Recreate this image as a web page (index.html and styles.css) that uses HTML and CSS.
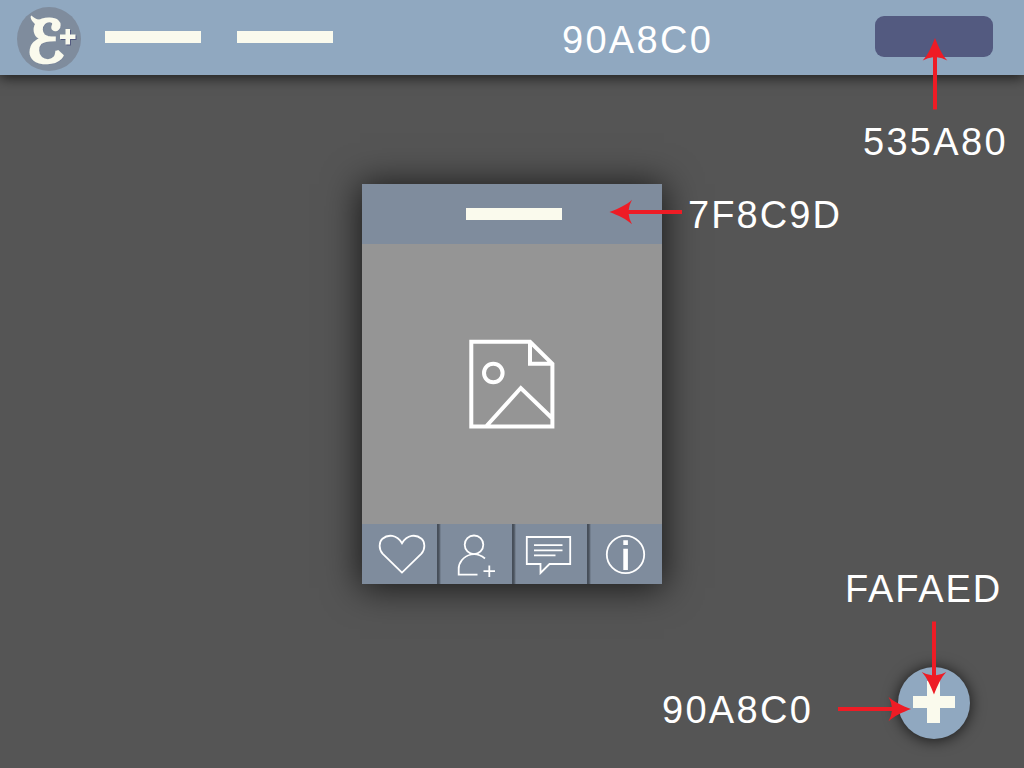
FILE: index.html
```html
<!DOCTYPE html>
<html lang="en">
<head>
<meta charset="utf-8">
<title>E+ colour guide</title>
<link rel="stylesheet" href="styles.css">
</head>
<body>
<header class="topbar">
  <div class="logo">
    <span class="logo-letter">ℰ</span>
    <svg class="logo-horn" width="16" height="16" viewBox="0 0 16 16"><path d="M1.300 0.500C4 2.500 6 4.500 9.500 4.500L12.500 9L8 13C5.500 9 2.500 7 1.500 5C0.500 3 0.300 1 1.300 0.500Z"/></svg>
    <svg class="logo-plus" width="16" height="16" viewBox="0 0 16 16"><path d="M5.500 0H10V5.500H15.500V10H10V15.500H5.500V10H0V5.500H5.500Z"/></svg>
  </div>
  <nav class="nav"><span class="bar"></span><span class="bar"></span></nav>
  <div class="header-button"></div>
</header>
<main class="stage">
  <section class="card">
    <div class="card-head"><span class="bar"></span></div>
    <div class="card-image">
      <svg width="86" height="90" viewBox="0 0 86 90" class="picture">
        <path d="M2.300 2.800H61L83.400 24.800V87.500H2.300Z M61 2.800V24.800H83.400 M17 87.500L51.800 49L83.400 79.500"/>
        <circle cx="24.300" cy="34" r="9.300"/>
      </svg>
    </div>
    <div class="actions">
      <div class="action"><svg width="75" height="60" viewBox="0 0 75 60"><path d="M40 48.600L20.800 29.800C16.300 25 17 18 20.500 14.700C26 10 34.800 10.500 40 19.200C45.200 10.500 54 10 59.500 14.700C63 18 63.700 25 59.200 29.800Z"/></svg></div>
      <div class="action"><svg width="75" height="60" viewBox="0 0 75 60"><circle cx="37" cy="20.800" r="9.300"/><path d="M48 34.500C43 30.500 38 29.500 34 30.500C26 32.500 21.500 39 21.700 45V50.700H40.500 M46.500 47.200H58 M52.300 41.500V53"/></svg></div>
      <div class="action"><svg width="75" height="60" viewBox="0 0 75 60"><path d="M14.800 13H58.200V40H37.500L28.500 49V40H14.800Z M22 21.200H50.500 M22 26.300H50.500 M22 31.400H43.500"/></svg></div>
      <div class="action"><svg width="75" height="60" viewBox="0 0 75 60"><circle cx="38.500" cy="30.500" r="18.700"/><path class="solid" d="M36.300 16.300H40.900V21H36.300Z M36.300 24.700H40.900V46H36.300Z"/></svg></div>
    </div>
  </section>
</main>
<div class="fab"><svg width="42" height="42" viewBox="0 0 42 42"><path d="M14 0H27V15H42V27H27V42H14V27H0V15H14Z"/></svg></div>

<span class="note note-header">90A8C0</span>
<span class="note note-button">535A80</span>
<span class="note note-card">7F8C9D</span>
<span class="note note-plus">FAFAED</span>
<span class="note note-fab">90A8C0</span>
<svg class="arrows" width="1024" height="768" viewBox="0 0 1024 768">
  <defs><g id="arrow"><path d="M0 0C3.500 9 7 17 12.300 22.500Q7 19.500 2 19.200H-2Q-7 19.500 -12.300 22.500C-7 17 -3.500 9 0 0Z"/></g></defs>
  <use href="#arrow" transform="translate(935 38)"/><path d="M933 56H937V109.500H933Z"/>
  <use href="#arrow" transform="translate(609.500 212) rotate(-90)"/><path d="M627 210H682V214H627Z"/>
  <use href="#arrow" transform="translate(934 694.500) rotate(180)"/><path d="M932 621.500H936V677H932Z"/>
  <use href="#arrow" transform="translate(911 709) rotate(90)"/><path d="M838 707H894V711H838Z"/>
</svg>
</body>
</html>
```
FILE: styles.css
```css
* { box-sizing: border-box; }
body {
  margin: 0;
  width: 1024px;
  height: 768px;
  position: relative;
  overflow: hidden;
  background: #555;
  font-family: "Liberation Sans", Arial, sans-serif;
}
svg { display: block; }
.topbar {
  position: absolute;
  inset: 0 0 auto;
  height: 75px;
  display: flex;
  align-items: flex-start;
  padding: 7px 31px 0 17px;
  background: #90a8c0;
  box-shadow: 0 3px 12px rgba(0, 0, 0, .65);
}
.logo {
  position: relative;
  width: 64px;
  height: 64px;
  border-radius: 50%;
  background: #7f8c9d;
}
.logo-letter {
  position: absolute;
  left: 10px;
  top: 6px;
  font: bold 58px/58px "DejaVu Serif", "DejaVu Sans", serif;
  color: #fafaed;
  -webkit-text-stroke: 2.8px #fafaed;
  text-shadow: 1px 1px 1px #535a80;
  transform: scaleX(.91);
  transform-origin: 0 50%;
}
.logo-horn { position: absolute; left: 13px; top: 8px; fill: #fafaed; }
.logo-plus {
  position: absolute;
  left: 43px;
  top: 22px;
  fill: #fafaed;
  overflow: visible;
  filter: drop-shadow(1px 1px 0 #535a80);
}
.nav { display: flex; gap: 36px; margin: 24px 0 0 24px; }
.bar { display: block; width: 96px; height: 12px; background: #fafaed; }
.header-button {
  width: 118px;
  height: 41px;
  margin: 9px 0 0 auto;
  border-radius: 9px;
  background: #535a80;
}
.stage { height: 768px; display: grid; place-items: center; }
.card {
  width: 300px;
  height: 400px;
  display: flex;
  flex-direction: column;
  box-shadow: 0 2px 34px 2px rgba(0, 0, 0, .72);
}
.card-head {
  height: 60px;
  padding-left: 4px;
  display: grid;
  place-items: center;
  background: #7f8c9d;
}
.card-image {
  flex: 1;
  display: grid;
  place-items: center;
  background: #959595;
}
.picture { fill: none; stroke: #fff; stroke-width: 4; }
.actions { display: grid; grid-template-columns: repeat(4, 75px); height: 60px; }
.action { background: #7f8c9d; }
.action + .action { background: linear-gradient(90deg, #444c57 0, #4c545f 2px, #7f8c9d 4px); }
.action svg { fill: none; stroke: #fff; stroke-width: 1.8; }
.action .solid { fill: #fff; stroke: none; }
.fab {
  position: absolute;
  left: 898px;
  top: 667px;
  width: 72px;
  height: 72px;
  display: grid;
  place-items: center;
  border-radius: 50%;
  background: #90a8c0;
  box-shadow: 0 1px 15px rgba(0, 0, 0, .75);
}
.fab svg { fill: #fafaed; margin-top: -2px; }
.note {
  position: absolute;
  font-size: 38px;
  line-height: 42px;
  letter-spacing: 2.3px;
  color: #fff;
  white-space: nowrap;
}
.note-header { left: 562px; top: 19px; }
.note-button { left: 863px; top: 121px; }
.note-card { left: 688px; top: 194px; letter-spacing: 2.1px; }
.note-plus { left: 845px; top: 568px; letter-spacing: 1.9px; }
.note-fab { left: 662px; top: 689px; }
.arrows { position: absolute; inset: 0; fill: #ee1c25; }
```
